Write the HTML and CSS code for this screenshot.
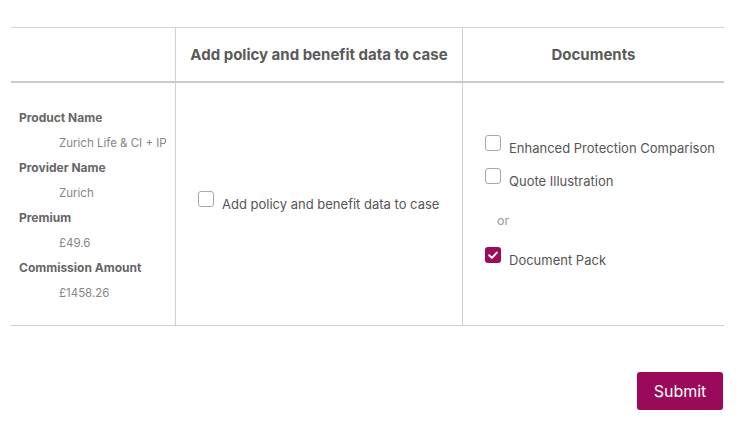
FILE: index.html
```html
<!DOCTYPE html>
<html>
<head>
<meta charset="utf-8">
<link rel="stylesheet" href="styles.css">
</head>
<body>
<div class="page">
  <table class="grid">
    <thead>
      <tr>
        <th class="c1"></th>
        <th class="c2">Add policy and benefit data to case</th>
        <th class="c3">Documents</th>
      </tr>
    </thead>
    <tbody>
      <tr>
        <td class="c1">
          <dl class="details">
            <dt>Product Name</dt>
            <dd>Zurich Life &amp; CI + IP</dd>
            <dt>Provider Name</dt>
            <dd>Zurich</dd>
            <dt>Premium</dt>
            <dd>£49.6</dd>
            <dt>Commission Amount</dt>
            <dd>£1458.26</dd>
          </dl>
        </td>
        <td class="c2">
          <label class="check mid"><span class="box"></span><span>Add policy and benefit data to case</span></label>
        </td>
        <td class="c3">
          <div class="docs">
            <label class="check"><span class="box"></span><span>Enhanced Protection Comparison</span></label>
            <label class="check"><span class="box"></span><span>Quote Illustration</span></label>
            <div class="or">or</div>
            <label class="check"><span class="box on"><svg viewBox="0 0 16 16" width="16" height="16"><path d="M4.2 8.3 L6.9 10.9 L11.8 5.6" fill="none" stroke="#fff" stroke-width="2" stroke-linecap="round" stroke-linejoin="round"/></svg></span><span>Document Pack</span></label>
          </div>
        </td>
      </tr>
    </tbody>
  </table>
  <div class="actions">
    <button class="submit">Submit</button>
  </div>
</div>
</body>
</html>
```
FILE: styles.css
```css
html, body {
  margin: 0;
  padding: 0;
  background: #fff;
}
body {
  font-family: Inter, "Open Sans", "Liberation Sans", sans-serif;
  color: #666;
}
.page {
  padding: 27px 18px 0 11px;
}
.grid {
  width: 713px;
  border-collapse: collapse;
  table-layout: fixed;
  border-top: 1px solid #d4d4d4;
  border-bottom: 1px solid #cfcfcf;
}
.grid th, .grid td {
  padding: 0;
}
.grid .c1 { width: 164px; }
.grid .c2 { width: 286px; }
.grid .c3 { width: 261px; }
.grid th {
  height: 53px;
  border-bottom: 2px solid #cacaca;
  font-size: 15px;
  font-weight: 700;
  color: #5a5a5a;
  text-align: center;
  letter-spacing: 0;
}
.grid th + th, .grid td + td {
  border-left: 1px solid #cfcfcf;
}
.grid td {
  height: 242px;
  vertical-align: middle;
}
.details {
  margin: 0;
  padding: 14px 0 0 8px;
}
.details dt {
  font-size: 12px;
  font-weight: 700;
  color: #666;
  line-height: 14px;
  margin: 0 0 11px;
}
.details dd {
  font-size: 11.5px;
  color: #858585;
  line-height: 14px;
  margin: 0 0 11px 40px;
}
.check {
  display: flex;
  align-items: flex-start;
  gap: 8px;
  font-size: 13px;
  color: #555;
  line-height: 16px;
}
.check .box {
  flex: none;
  width: 14px;
  height: 14px;
  border: 1px solid #a8a8a8;
  border-radius: 3px;
  margin-top: -5px;
  background: #fff;
}
.check .box.on {
  width: 16px;
  height: 16px;
  border: none;
  background: #9c0a5a;
}
.check .box svg { display: block; }
.check.mid {
  padding-left: 22px;
  margin-top: -1px;
}
.docs {
  padding-left: 22px;
  display: flex;
  flex-direction: column;
  gap: 17px;
  margin-top: -1px;
}
.docs .or {
  font-size: 12.5px;
  color: #999;
  padding-left: 12px;
  line-height: 16px;
  margin: 7px 0 6px;
}
.actions {
  display: flex;
  justify-content: flex-end;
  padding-top: 46px;
  width: 713px;
}
.submit {
  font-family: inherit;
  width: 86px;
  height: 38px;
  background: #9b0a5a;
  color: #fff;
  border: none;
  border-radius: 3px;
  font-size: 16px;
  box-shadow: 0 1px 2px rgba(0,0,0,0.15);
  margin-right: 1px;
}
```
